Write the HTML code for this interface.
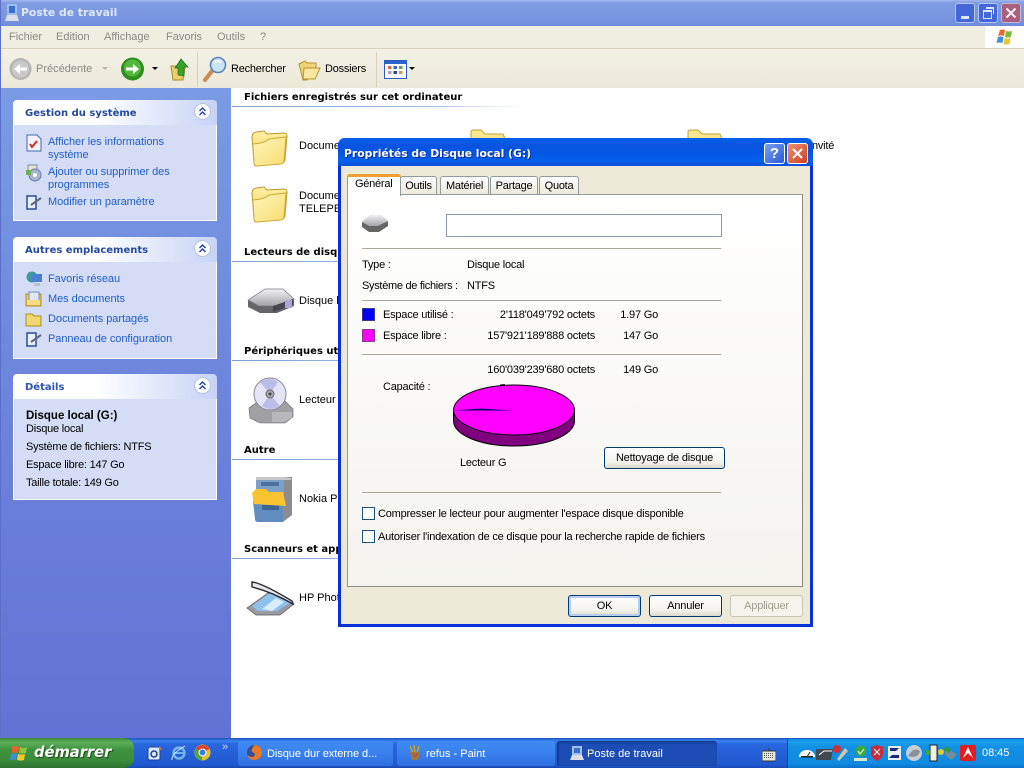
<!DOCTYPE html>
<html lang="fr"><head><meta charset="utf-8"><title>Poste de travail</title>
<style>
html,body{margin:0;padding:0;width:1024px;height:768px;overflow:hidden;background:#fff}
body{position:relative;font-family:"Liberation Sans",sans-serif;font-size:11px;color:#000}
div,span,svg{position:absolute}
.t{white-space:nowrap;line-height:16px}
.d{letter-spacing:-.22px}
.m{color:#8a8a80;font-size:11px}
.b{font-weight:bold;font-family:"DejaVu Sans",sans-serif;font-size:10px}
.h{height:1px;background:linear-gradient(90deg,#7b9fd8,#a9c0ea 70%,#fff)}
.panel{left:13px;width:204px;background:#d5ddf6;box-shadow:inset -1px -1px 0 #fff,inset 1px 0 0 #fff}
.phead{left:13px;width:204px;height:25px;border-radius:4px 4px 0 0;background:linear-gradient(90deg,#fff,#fff 40%,#c7d3f7)}
.pt{font-weight:bold;font-family:"DejaVu Sans",sans-serif;font-size:10px;color:#234a9e}
.l{color:#215dc6;font-size:11px;letter-spacing:-.05px}
.cb{left:194px;width:17px;height:17px}
.hr{height:1px;background:#aca899;left:362px;width:359px}
.btn{border:1px solid #003c74;border-radius:3px;background:linear-gradient(#fff,#f4f3ee 70%,#dcd8ca);text-align:center;height:20px;line-height:21px;font-size:11px;letter-spacing:-.2px}
.tab{top:176px;height:17px;background:linear-gradient(#fff,#ece9dc);border:1px solid #919b9c;border-bottom:0;border-radius:3px 3px 0 0;text-align:center;line-height:19px;font-size:11px;letter-spacing:-.25px}
.task{top:741px;height:25px;border-radius:3px;color:#fff;background:linear-gradient(#3f8cf3,#3a80ee 50%,#2f6fe0);font-size:11px;white-space:nowrap}
.val{text-align:right;white-space:nowrap;line-height:16px;letter-spacing:-.2px}
.chk{width:11px;height:11px;border:1px solid #1c5180;background:#fff;left:362px}
</style></head><body>
<svg width="0" height="0" style="left:0;top:0"><defs>
<linearGradient id="fb" x1="0" y1="0" x2="0" y2="1"><stop offset="0" stop-color="#fff0a0"/><stop offset="1" stop-color="#eecf62"/></linearGradient>
<linearGradient id="ff" x1="0" y1="0" x2="1" y2="1"><stop offset="0" stop-color="#fff6bc"/><stop offset="1" stop-color="#f8dc72"/></linearGradient>
<linearGradient id="dk" x1="0" y1="0" x2="0" y2="1"><stop offset="0" stop-color="#f2f2f4"/><stop offset="1" stop-color="#a4a4a8"/></linearGradient>
</defs></svg>

<!-- explorer title bar -->
<div style="left:0;top:0;width:1024px;height:26px;background:linear-gradient(#a0b8ef 0,#7e9ce2 12%,#7b96e0 60%,#6f8cdc 100%)"></div>
<svg style="left:3px;top:3px" width="18" height="20" viewBox="0 0 18 20"><rect x="4" y="1" width="10" height="11" rx="1" fill="#9cc0ec"/><rect x="6" y="3" width="6" height="7" fill="#3a6fd0"/><path d="M4 12h10l2 6H2z" fill="#d8dde8"/></svg>
<div class="t" style="left:21px;top:5px;color:#dfe8fb;font-weight:bold;font-family:'DejaVu Sans',sans-serif;font-size:10.8px">Poste de travail</div>
<div style="left:955px;top:3px;width:18px;height:18px;border-radius:3px;background:#4468d8;border:1px solid #b5c6f0"><div style="left:5px;top:12px;width:8px;height:3px;background:#dbe6fb"></div></div>
<div style="left:978px;top:3px;width:18px;height:18px;border-radius:3px;background:#4468d8;border:1px solid #b5c6f0"><div style="left:4px;top:6px;width:7px;height:6px;border:1px solid #dbe6fb;border-top-width:2px"></div><div style="left:7px;top:3px;width:7px;height:5px;border:1px solid #dbe6fb;border-top-width:2px;border-left:0;border-bottom:0"></div></div>
<div style="left:1001px;top:3px;width:18px;height:18px;border-radius:3px;background:#a9607f;border:1px solid #c4b4d0"><svg style="left:3px;top:3px" width="12" height="12"><path d="M1.500 1.500L10.500 10.500M10.500 1.500L1.500 10.500" stroke="#f4eef2" stroke-width="2"/></svg></div>

<!-- menu bar -->
<div style="left:0;top:26px;width:1024px;height:22px;background:#f0eee1"></div>
<div style="left:0;top:48px;width:1024px;height:1px;background:#d8d2bd"></div>
<span class="t m" style="left:9px;top:29px">Fichier</span>
<span class="t m" style="left:56px;top:29px">Edition</span>
<span class="t m" style="left:104px;top:29px">Affichage</span>
<span class="t m" style="left:166px;top:29px">Favoris</span>
<span class="t m" style="left:217px;top:29px">Outils</span>
<span class="t m" style="left:260px;top:29px">?</span>
<div style="left:985px;top:26px;width:39px;height:22px;background:#fff"></div>
<svg style="left:995px;top:27px" width="20" height="20" viewBox="0 0 20 20"><path d="M5 3q3-1 5 0l-1 6q-3-1-6 0z" fill="#ea6a2e"/><path d="M11 4q3 1 6 0l-1 6q-3 1-6 0z" fill="#7db83c"/><path d="M3 10q3-1 5.500 0l-1 6q-3-1-6 0z" fill="#3c8fdc"/><path d="M9.500 11q3 1 6 0l-1 6q-3 1-6 0z" fill="#f2c42c"/></svg>

<!-- toolbar -->
<div style="left:0;top:49px;width:1024px;height:39px;background:linear-gradient(#f3f1e6,#ece9d9)"></div>
<svg style="left:9px;top:57px" width="24" height="24" viewBox="0 0 24 24"><circle cx="11.500" cy="12" r="11" fill="#b5b5b5"/><circle cx="11.500" cy="12" r="8.500" fill="#c9c9c9"/><path d="M18 10.500h-7V7l-6 5 6 5v-3.500h7z" fill="#fff"/></svg>
<span class="t m" style="left:36px;top:61px">Précédente</span>
<svg style="left:101px;top:66px" width="8" height="5"><path d="M1 1h6L4 4z" fill="#b8b8b0"/></svg>
<svg style="left:121px;top:57px" width="24" height="24" viewBox="0 0 24 24"><circle cx="11.500" cy="12" r="11.500" fill="#2f8e1f"/><circle cx="11.500" cy="11" r="8.500" fill="#55b83a"/><path d="M5 10.500h7V7l6 5-6 5v-3.500H5z" fill="#fff"/></svg>
<svg style="left:151px;top:66px" width="8" height="5"><path d="M1 1h6L4 4z" fill="#000"/></svg>
<svg style="left:170px;top:57px" width="22" height="24" viewBox="0 0 22 24"><path d="M1 9h6l1 2h7l-2 12H3z" fill="#eccf6d" stroke="#a98a28"/><path d="M8 18v-7H5l6-9 7 8h-4v9z" fill="#36a32b" stroke="#1e6d18" stroke-width=".7"/></svg>
<div style="left:197px;top:52px;width:1px;height:35px;background:#d8d2bd"></div>
<svg style="left:203px;top:56px" width="26" height="26" viewBox="0 0 26 26"><path d="M9 15L2 24" stroke="#c98a58" stroke-width="4" stroke-linecap="round"/><circle cx="15" cy="9" r="7.500" fill="#c9e4f6" stroke="#5b85b8" stroke-width="1.600"/><path d="M11 7q3-3 7-1" stroke="#fff" stroke-width="2" fill="none"/></svg>
<span class="t d" style="left:231px;top:61px">Rechercher</span>
<svg style="left:298px;top:59px" width="24" height="22" viewBox="0 0 24 22"><path d="M1 5l6-3 2 2 9 0v4l-9 13H5z" fill="#efd27a" stroke="#b4952f"/><path d="M6 9h16l-5 11H5z" fill="#f9e6a0" stroke="#b4952f"/></svg>
<span class="t d" style="left:325px;top:61px">Dossiers</span>
<div style="left:376px;top:52px;width:1px;height:35px;background:#d8d2bd"></div>
<svg style="left:384px;top:60px" width="23" height="19" viewBox="0 0 23 19"><rect x=".5" y=".5" width="22" height="18" fill="#fff" stroke="#2a5cc0"/><rect x="1" y="1" width="21" height="3" fill="#2a62cf"/><g><rect x="4" y="6" width="3.500" height="3" fill="#d06a50"/><rect x="9.500" y="6" width="3.500" height="3" fill="#3a60c0"/><rect x="15" y="6" width="3.500" height="3" fill="#60a050"/><rect x="4" y="11" width="3.500" height="3" fill="#c090b0"/><rect x="9.500" y="11" width="3.500" height="3" fill="#2a4a90"/><rect x="15" y="11" width="3.500" height="3" fill="#c0a040"/></g></svg>
<svg style="left:409px;top:67px" width="7" height="5"><path d="M0 0h6L3 3z" fill="#000"/></svg>

<!-- left pane -->
<div style="left:0;top:88px;width:231px;height:650px;background:linear-gradient(#7a9be3,#6d85dc 45%,#6272d4)"></div>
<div style="left:0;top:0;width:1px;height:738px;background:#5a6fc8"></div>

<div class="panel" style="top:125px;height:96px"></div>
<div class="phead" style="top:100px"></div>
<span class="t pt" style="left:25px;top:106px">Gestion du système</span>
<svg class="cb" style="top:103px" viewBox="0 0 17 17"><circle cx="8.500" cy="8.500" r="8" fill="#fff" stroke="#b4c2e4"/><path d="M5.500 8L8.500 5l3 3M5.500 12l3-3 3 3" stroke="#1f3f90" stroke-width="1.400" fill="none"/></svg>
<svg style="left:26px;top:134px" width="16" height="18" viewBox="0 0 16 18"><path d="M1 1h10l4 4v12H1z" fill="#f3f3fb" stroke="#4468b0"/><path d="M4 10l2 3 5-6" stroke="#d02a2a" stroke-width="2" fill="none"/></svg>
<span class="t l" style="left:48px;top:134px">Afficher les informations</span>
<span class="t l" style="left:48px;top:147px">système</span>
<svg style="left:25px;top:164px" width="18" height="18" viewBox="0 0 18 18"><rect x="3" y="1" width="9" height="6" fill="#e8e4d0" stroke="#7a8aa8"/><circle cx="10" cy="11" r="6" fill="#a8b4d0" stroke="#6a7ab0"/><circle cx="10" cy="11" r="2" fill="#fff"/><rect x="1" y="6" width="5" height="5" fill="#6cb050"/></svg>
<span class="t l" style="left:48px;top:164px">Ajouter ou supprimer des</span>
<span class="t l" style="left:48px;top:177px">programmes</span>
<svg style="left:25px;top:194px" width="18" height="17" viewBox="0 0 18 17"><rect x="2" y="2" width="9" height="13" fill="#e8eef8" stroke="#2c4c90" stroke-width="1.500"/><path d="M6 11l10-7" stroke="#5a6a80" stroke-width="2"/></svg>
<span class="t l" style="left:48px;top:194px">Modifier un paramètre</span>

<div class="panel" style="top:262px;height:97px"></div>
<div class="phead" style="top:237px"></div>
<span class="t pt" style="left:25px;top:243px">Autres emplacements</span>
<svg class="cb" style="top:240px" viewBox="0 0 17 17"><circle cx="8.500" cy="8.500" r="8" fill="#fff" stroke="#b4c2e4"/><path d="M5.500 8L8.500 5l3 3M5.500 12l3-3 3 3" stroke="#1f3f90" stroke-width="1.400" fill="none"/></svg>
<svg style="left:25px;top:271px" width="18" height="17" viewBox="0 0 18 17"><circle cx="7" cy="6" r="5.500" fill="#3c9a9a"/><rect x="7" y="3" width="10" height="8" fill="#4a80d8"/><rect x="9" y="12" width="6" height="3" fill="#b8c0d8"/></svg>
<span class="t l" style="left:48px;top:271px">Favoris réseau</span>
<svg style="left:25px;top:291px" width="18" height="16" viewBox="0 0 18 16"><path d="M1 3h15v12H1z" fill="#eccb5e" stroke="#b48a20"/><rect x="4" y="1" width="10" height="9" fill="#dfe6f6" stroke="#7488b0"/><rect x="2" y="9" width="13" height="5" fill="#f5dc80"/></svg>
<span class="t l" style="left:48px;top:291px">Mes documents</span>
<svg style="left:25px;top:311px" width="18" height="16" viewBox="0 0 18 16"><path d="M1 3h6l2 2h7v10H1z" fill="#f0d870" stroke="#b08a20"/></svg>
<span class="t l" style="left:48px;top:311px">Documents partagés</span>
<svg style="left:25px;top:331px" width="18" height="17" viewBox="0 0 18 17"><rect x="2" y="2" width="9" height="13" fill="#e8eef8" stroke="#2c4c90" stroke-width="1.500"/><path d="M6 11l10-7" stroke="#5a6a80" stroke-width="2"/></svg>
<span class="t l" style="left:48px;top:331px">Panneau de configuration</span>

<div class="panel" style="top:399px;height:101px"></div>
<div class="phead" style="top:374px"></div>
<span class="t pt" style="left:25px;top:380px;color:#2a55b0">Détails</span>
<svg class="cb" style="top:377px" viewBox="0 0 17 17"><circle cx="8.500" cy="8.500" r="8" fill="#fff" stroke="#b4c2e4"/><path d="M5.500 8L8.500 5l3 3M5.500 12l3-3 3 3" stroke="#1f3f90" stroke-width="1.400" fill="none"/></svg>
<span class="t" style="left:26px;top:408px;font-weight:bold;font-size:11.500px">Disque local (G:)</span>
<span class="t d" style="left:26px;top:421px">Disque local</span>
<span class="t d" style="left:26px;top:439px">Système de fichiers: NTFS</span>
<span class="t d" style="left:26px;top:457px">Espace libre: 147 Go</span>
<span class="t d" style="left:26px;top:475px">Taille totale: 149 Go</span>

<!-- right pane -->
<span class="t b" style="left:244px;top:90px">Fichiers enregistrés sur cet ordinateur</span>
<div class="h" style="left:232px;top:106px;width:290px"></div>
<svg style="left:250px;top:128px" width="40" height="40" viewBox="0 0 40 40"><path d="M2 9q0-4 4-5l8-1 3 3 17-1q3 0 3 3l-2 24q0 2-3 3L7 38q-3 0-3-3z" fill="url(#fb)" stroke="#bd9a2e"/><path d="M3 16q12-1 16-5l17-2-2 24q0 2-3 3L7 38q-3 0-3-3z" fill="url(#ff)" stroke="#cfa93c"/></svg>
<span class="t" style="left:299px;top:138px">Docume</span>
<svg style="left:250px;top:184px" width="40" height="40" viewBox="0 0 40 40"><path d="M2 9q0-4 4-5l8-1 3 3 17-1q3 0 3 3l-2 24q0 2-3 3L7 38q-3 0-3-3z" fill="url(#fb)" stroke="#bd9a2e"/><path d="M3 16q12-1 16-5l17-2-2 24q0 2-3 3L7 38q-3 0-3-3z" fill="url(#ff)" stroke="#cfa93c"/></svg>
<span class="t" style="left:299px;top:188px">Docume</span>
<span class="t" style="left:299px;top:201px">TELEPER</span>
<svg style="left:469px;top:128px" width="40" height="12" viewBox="0 0 40 12"><path d="M2 11V4q0-2 3-2h7l4 4h18l2 5z" fill="#fbe88e" stroke="#c2a136"/></svg>
<svg style="left:686px;top:128px" width="40" height="12" viewBox="0 0 40 12"><path d="M2 11V4q0-2 3-2h7l4 4h18l2 5z" fill="#fbe88e" stroke="#c2a136"/></svg>
<span class="t d" style="left:812px;top:138px">nvité</span>

<span class="t b" style="left:244px;top:245px">Lecteurs de disques durs</span>
<div class="h" style="left:232px;top:261px;width:290px"></div>
<svg style="left:247px;top:287px" width="48" height="28" viewBox="0 0 48 28"><path d="M1 13L18 2h18l11 10v7L30 26 13 26 1 20z" fill="#66666a"/><path d="M1 13L18 2h18l11 10-16 7H12z" fill="url(#dk)" stroke="#77777c" stroke-width=".7"/><path d="M26 19l20-7v6L26 25z" fill="#46464c"/><rect x="38" y="13" width="7" height="8" fill="#a8a8d8"/></svg>
<span class="t" style="left:299px;top:293px">Disque lo</span>

<span class="t b" style="left:244px;top:344px">Périphériques utilisant</span>
<div class="h" style="left:232px;top:360px;width:290px"></div>
<svg style="left:248px;top:376px" width="46" height="48" viewBox="0 0 46 48"><path d="M1 32l11-8h24l9 9v8l-8 6H12L2 42z" fill="#a0a0a4" stroke="#66666a" stroke-width=".6"/><path d="M24 36h20v6l-8 4H24z" fill="#b8b8bc"/><circle cx="22" cy="18" r="16" fill="#e4e4f6" stroke="#88889a"/><path d="M22 18L12 6Q22 0 30 6zM22 18L32 30Q22 36 14 30z" fill="#bcbce8"/><circle cx="22" cy="18" r="4" fill="#a8a8b0" stroke="#66666a"/><circle cx="22" cy="18" r="1.500" fill="#444"/></svg>
<span class="t" style="left:299px;top:392px">Lecteur</span>

<span class="t b" style="left:244px;top:443px">Autre</span>
<div class="h" style="left:232px;top:459px;width:290px"></div>
<svg style="left:250px;top:474px" width="44" height="50" viewBox="0 0 44 50"><path d="M33 3h9v38l-9 7z" fill="#8c8c90"/><path d="M6 3h28v22H6z" fill="#7ba0c8"/><path d="M3 27h30v21H8q-3 0-3-3z" fill="#608cc0"/><path d="M6 3h28l7 1v2H6z" fill="#c8c8cc"/><rect x="11" y="8" width="18" height="4" fill="#4a70a0"/><rect x="12" y="31" width="17" height="5" fill="#3f6494"/><path d="M2 19l4-4h10l3 3h14l3 14-32-2z" fill="#f8c530"/></svg>
<span class="t" style="left:299px;top:491px">Nokia Ph</span>

<span class="t b" style="left:244px;top:542px">Scanneurs et appareils</span>
<div class="h" style="left:232px;top:558px;width:290px"></div>
<svg style="left:246px;top:580px" width="50" height="36" viewBox="0 0 50 36"><path d="M1 28L22 13l26 11-14 11H10z" fill="#9a9aa0" stroke="#55555a" stroke-width=".7"/><path d="M6 26L24 13l20 10-13 8H12z" fill="#8ec2ec"/><path d="M16 29L30 18l8 4-12 9z" fill="#d8ecfa"/><path d="M6 2q10 1 40 19l1 3Q26 12 6 7z" fill="#e8e8ec" stroke="#2a2a30" stroke-width="1.400"/></svg>
<span class="t" style="left:299px;top:590px">HP Phot</span>

<!-- dialog -->
<div style="left:338px;top:138px;width:475px;height:489px;background:#0831d9;border-radius:7px 7px 0 0"></div>
<div style="left:338px;top:138px;width:475px;height:28px;border-radius:7px 7px 0 0;background:linear-gradient(#0a5ae8 0,#0460e8 8%,#0a55e0 20%,#0454e2 50%,#0660ec 80%,#0a50d8 100%)"></div>
<div style="left:341px;top:166px;width:469px;height:458px;background:#ece9d8"></div>
<div class="t" style="left:344px;top:146px;color:#fff;font-weight:bold;font-family:'DejaVu Sans',sans-serif;font-size:10.8px;text-shadow:1px 1px 0 #0a2fa0">Propriétés de Disque local (G:)</div>
<div style="left:764px;top:143px;width:19px;height:19px;border-radius:3px;background:linear-gradient(135deg,#7a9ff0,#2a5ad8);border:1px solid #fff;color:#fff;font-weight:bold;font-size:15px;line-height:19px;text-align:center">?</div>
<div style="left:787px;top:143px;width:19px;height:19px;border-radius:3px;background:linear-gradient(135deg,#ee9078,#d0401c);border:1px solid #fff"><svg style="left:4px;top:4px" width="11" height="11"><path d="M1 1L10 10M10 1L1 10" stroke="#fff" stroke-width="2"/></svg></div>

<!-- tab pane -->
<div style="left:347px;top:194px;width:454px;height:391px;border:1px solid #919b9c;background:linear-gradient(#fff,#f4f3ee);border-right-color:#8a8a80;border-bottom-color:#8a8a80"></div>
<div class="tab" style="left:400px;width:35px">Outils</div>
<div class="tab" style="left:440px;width:47px">Matériel</div>
<div class="tab" style="left:490px;width:46px">Partage</div>
<div class="tab" style="left:539px;width:38px">Quota</div>
<div style="left:347px;top:174px;width:52px;height:21px;background:#fff;border:1px solid #919b9c;border-bottom:0;border-radius:3px 3px 0 0"><div style="left:-1px;top:-1px;width:54px;height:3px;background:#f0a030;border-radius:3px 3px 0 0"></div></div>
<span class="t" style="left:355px;top:176px;letter-spacing:-.25px">Général</span>

<svg style="left:361px;top:214px" width="28" height="19" viewBox="0 0 28 19"><path d="M1 8L10 1h9l8 6v5l-9 6H8L1 13z" fill="#666"/><path d="M1 8L10 1h9l8 6-10 5H8z" fill="url(#dk)"/></svg>
<div style="left:446px;top:214px;width:274px;height:21px;border:1px solid #8a9aac;background:#fff"></div>
<div class="hr" style="top:248px"></div>
<span class="t d" style="left:362px;top:257px">Type :</span>
<span class="t d" style="left:467px;top:257px">Disque local</span>
<span class="t d" style="left:362px;top:278px;letter-spacing:-.3px">Système de fichiers :</span>
<span class="t d" style="left:467px;top:278px">NTFS</span>
<div class="hr" style="top:300px"></div>
<div style="left:362px;top:308px;width:13px;height:13px;background:#00f;box-shadow:inset 0 0 0 1px #3a3a8a"></div>
<span class="t d" style="left:383px;top:307px">Espace utilisé :</span>
<div class="val" style="left:440px;width:155px;top:307px">2'118'049'792 octets</div>
<div class="val" style="left:600px;width:58px;top:307px">1.97 Go</div>
<div style="left:362px;top:329px;width:13px;height:13px;background:#f0f;box-shadow:inset 0 0 0 1px #8a3a8a"></div>
<span class="t d" style="left:383px;top:328px">Espace libre :</span>
<div class="val" style="left:440px;width:155px;top:328px">157'921'189'888 octets</div>
<div class="val" style="left:600px;width:58px;top:328px">147 Go</div>
<div class="hr" style="top:354px"></div>
<div class="val" style="left:440px;width:155px;top:362px">160'039'239'680 octets</div>
<div class="val" style="left:600px;width:58px;top:362px">149 Go</div>
<span class="t d" style="left:383px;top:379px">Capacité :</span>
<svg style="left:450px;top:382px" width="128" height="68" viewBox="0 0 128 68"><path d="M3.500 28v11c0 14 27 25 60.500 25s60.500-11 60.500-25V28z" fill="#800080" stroke="#000" stroke-width="1"/><ellipse cx="64" cy="28" rx="60.500" ry="25" fill="#f0f" stroke="#000" stroke-width="1"/><path d="M64 28.500H3.500L30 26.500z" fill="#000070"/><path d="M50 3.300l5-.4" stroke="#000" stroke-width="1.500"/></svg>
<span class="t d" style="left:460px;top:455px">Lecteur G</span>
<div class="btn" style="left:604px;top:447px;width:119px">Nettoyage de disque</div>
<div class="hr" style="top:492px"></div>
<div class="chk" style="top:507px"></div>
<span class="t d" style="left:378px;top:506px">Compresser le lecteur pour augmenter l'espace disque disponible</span>
<div class="chk" style="top:530px"></div>
<span class="t d" style="left:378px;top:529px">Autoriser l'indexation de ce disque pour la recherche rapide de fichiers</span>

<div class="btn" style="left:568px;top:595px;width:71px;box-shadow:inset 0 0 0 2px #b5cdf0">OK</div>
<div class="btn" style="left:649px;top:595px;width:71px">Annuler</div>
<div class="btn" style="left:730px;top:595px;width:71px;border-color:#c9c7ba;background:#f4f3ec;color:#a09e90">Appliquer</div>

<!-- taskbar -->
<div style="left:0;top:738px;width:1024px;height:30px;background:linear-gradient(#1d4fc0 0,#3a84ee 3px,#2a68e0 6px,#2560d8 50%,#2058cf 90%,#1a48b0 100%)"></div>
<div style="left:0;top:738px;width:134px;height:30px;border-radius:0 10px 10px 0;background:linear-gradient(#3d8a3d 0,#5cae58 15%,#3e933f 40%,#3b8c3b 75%,#2f7030 100%)"></div>
<svg style="left:10px;top:744px" width="20" height="19" viewBox="0 0 20 19"><path d="M2 3q3-2 7 0l-1 6q-3-1-6 0z" fill="#e8622a"/><path d="M10 3q3 2 7 0l-1 6q-3 1-7 0z" fill="#8cc63f"/><path d="M1 10q3-1 6 0l-1 6q-3-1-6 0z" fill="#3d8fdc"/><path d="M8 10q4 1 7 0l-1 6q-3 1-7 0z" fill="#f5c82d"/></svg>
<span class="t" style="left:34px;top:743px;color:#fff;font-family:'DejaVu Sans',sans-serif;font-style:italic;font-weight:bold;font-size:14.7px;line-height:20px;text-shadow:1px 1px 1px #1c4a1c">démarrer</span>
<svg style="left:147px;top:745px" width="16" height="16" viewBox="0 0 16 16"><rect x="1" y="2" width="12" height="13" rx="2" fill="#dce8fa" stroke="#1b3f9a"/><circle cx="7" cy="9" r="3" fill="none" stroke="#1b3f9a" stroke-width="1.500"/><path d="M12 1l3 3-3 2z" fill="#e86a2e"/></svg>
<svg style="left:171px;top:744px" width="17" height="18" viewBox="0 0 17 18"><circle cx="8" cy="9" r="5.500" fill="none" stroke="#6fb7f2" stroke-width="2.400"/><path d="M3 9h10" stroke="#6fb7f2" stroke-width="2"/><path d="M1 16Q0 10 14 2" stroke="#d8ecff" stroke-width="1" fill="none"/></svg>
<svg style="left:194px;top:744px" width="17" height="17" viewBox="0 0 17 17"><circle cx="8.500" cy="8.500" r="8" fill="#e8bf2e"/><path d="M8.500 8.500L1.500 5A8 8 0 0 1 15.500 5z" fill="#d8432e"/><path d="M8.500 8.500L1.500 5A8 8 0 0 0 8 16.500z" fill="#4ea83c"/><circle cx="8.500" cy="8.500" r="3.500" fill="#3a7de0" stroke="#fff"/></svg>
<span class="t" style="left:222px;top:739px;color:#c6d8f8">»</span>

<div class="task" style="left:238px;width:155px"><span class="t" style="left:29px;top:5px;color:#fff;letter-spacing:-.05px">Disque dur externe d...</span></div>
<svg style="left:246px;top:744px" width="17" height="17" viewBox="0 0 17 17"><circle cx="8.500" cy="8.500" r="7.500" fill="#3a4f90"/><path d="M8.500 1a7.500 7.500 0 0 1 0 15q-6 0-7-5 2 2 5 2 3-1 2-4-3-1-3-3 2-4 3-5z" fill="#e8792a"/></svg>
<div class="task" style="left:397px;width:158px"><span class="t" style="left:29px;top:5px;color:#fff">refus - Paint</span></div>
<svg style="left:408px;top:745px" width="14" height="16" viewBox="0 0 14 16"><path d="M2 1l3 7M6 0l1 8M11 1L9 8" stroke="#c8a030" stroke-width="1.600"/><path d="M2 7h10l-2 8H4z" fill="#9a7a40"/><path d="M4 8l3 4 3-4" stroke="#d83a2a" fill="none"/></svg>
<div class="task" style="left:557px;width:160px;background:#1c4cb4;box-shadow:inset 1px 1px 2px #103078"><span class="t" style="left:30px;top:5px;color:#fff">Poste de travail</span></div>
<svg style="left:570px;top:745px" width="14" height="16" viewBox="0 0 14 16"><rect x="2" y="1" width="10" height="9" fill="#9cc0ec"/><rect x="4" y="3" width="6" height="5" fill="#3a6fd0"/><path d="M2 10h10l2 5H0z" fill="#d8dde8"/></svg>
<svg style="left:762px;top:748px" width="14" height="14" viewBox="0 0 14 14"><rect x="0" y="3" width="14" height="10" fill="#e8e8d8" stroke="#333"/><path d="M2 5.500h10M2 7.500h10M2 9.500h10" stroke="#555" stroke-dasharray="1 1"/><path d="M7 3V0" stroke="#333"/></svg>

<div style="left:787px;top:739px;width:237px;height:29px;background:linear-gradient(#0f8be0 0,#18a0ec 3px,#1290e4 8px,#0f8ae0 85%,#0a70c8 100%);border-left:1px solid #0a4aa0"></div>
<svg style="left:798px;top:744px" width="182" height="18" viewBox="0 0 182 18"><path d="M1 13a8 7 0 0 1 16 0z" fill="#fff"/><path d="M9 13l3-5" stroke="#222"/><rect x="3" y="12" width="12" height="1.500" fill="#222"/>
<path d="M18 5h17l-2 11H18z" fill="#404a50"/><path d="M21 11l5-4h8" stroke="#fff" fill="none"/>
<g transform="translate(-5,0)"><circle cx="44" cy="5" r="4" fill="#d03030"/><path d="M44 15l8-11 3 3-9 10z" fill="#c8c8b8"/></g>
<circle cx="63" cy="7" r="5.500" fill="#3aaa3a"/><path d="M60 7l2 3 4-5" stroke="#fff" fill="none"/><path d="M56 14h13v3H56z" fill="#d8e8c8"/>
<path d="M79 1l6 2v6q0 5-6 8-6-3-6-8V3z" fill="#c82a3a"/><path d="M76 5l6 6M82 5l-6 6" stroke="#fff"/>
<path d="M90 2h13v14H90z" fill="#e8eef8"/><path d="M92 4h9l-7 7h7v3h-10l7-7h-6z" fill="#1a2a7a"/>
<circle cx="116" cy="9" r="8" fill="#c8ccd4"/><path d="M110 12q6-10 12-5-2 8-12 5z" fill="#8a8e96"/>
<g transform="translate(-2,0)"><rect x="134" y="1" width="7" height="16" fill="#f0f0e0" stroke="#222"/><rect x="130" y="6" width="4" height="5" fill="#38a838"/><circle cx="145" cy="8" r="3" fill="#e8c830"/></g>
<g transform="translate(-5,0)"><path d="M152 3l6 4 6 3-6 6-6-5z" fill="#7a8a98"/><path d="M152 2l6 4-2 3-5-3z" fill="#2f9a3a"/></g>
<g transform="translate(-9,0)"><rect x="171" y="1" width="16" height="16" rx="2" fill="#e02020"/><path d="M174 14l5-11 5 11-5-5z" fill="#fff"/></g></svg>
<span class="t" style="left:982px;top:745px;color:#fff;letter-spacing:-.05px">08:45</span>

</body></html>
